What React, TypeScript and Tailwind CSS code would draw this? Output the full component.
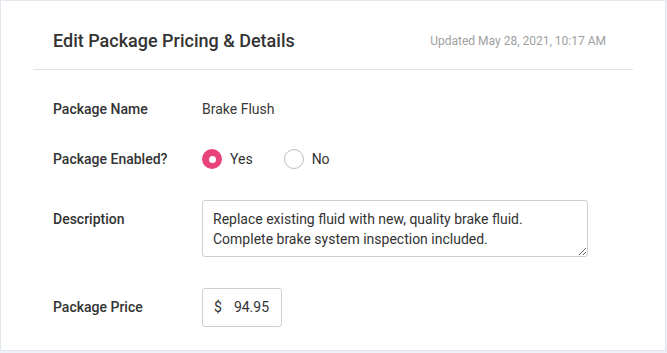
import { useState } from "react";

function Radio({ checked, label, onClick }: { checked: boolean; label: string; onClick: () => void }) {
  return (
    <button type="button" onClick={onClick} className="flex items-center gap-2">
      {checked ? (
        <span className="flex h-5 w-5 items-center justify-center rounded-full bg-[#e8427a]">
          <span className="h-[7px] w-[7px] rounded-full bg-white" />
        </span>
      ) : (
        <span className="h-5 w-5 rounded-full border border-[#bdbdbd] bg-white" />
      )}
      <span className="text-[14px] text-[#333]">{label}</span>
    </button>
  );
}

export default function App() {
  const [enabled, setEnabled] = useState(true);
  const [desc, setDesc] = useState(
    "Replace existing fluid with new, quality brake fluid.\nComplete brake system inspection included."
  );
  const [price, setPrice] = useState("94.95");

  return (
    <div className="h-screen w-full bg-[#eef1f5]" style={{ fontFamily: "Roboto, 'Liberation Sans', sans-serif" }}>
      <div className="h-[351px] w-[666px] overflow-hidden border border-[#e2e7ee] bg-white">
        {/* header */}
        <div className="mx-[32px] flex h-[69px] items-center justify-between border-b border-[#e0e2e6] pt-[11px] pl-5 pr-[27px]">
          <h1 className="text-[18px] font-medium text-[#333]">Edit Package Pricing &amp; Details</h1>
          <span className="text-[12px] text-[#a0a0a0]">Updated May 28, 2021, 10:17 AM</span>
        </div>

        <div className="px-[52px]">
          <div className="mt-[19px] flex h-10 items-center">
            <div className="w-[149px] text-[14px] font-medium text-[#333]">Package Name</div>
            <div className="text-[14px] text-[#3a3a3a]">Brake Flush</div>
          </div>

          <div className="mt-[10px] flex h-10 items-center">
            <div className="w-[149px] text-[14px] font-medium text-[#333]">Package Enabled?</div>
            <div className="flex items-center gap-[31px]">
              <Radio checked={enabled} label="Yes" onClick={() => setEnabled(true)} />
              <Radio checked={!enabled} label="No" onClick={() => setEnabled(false)} />
            </div>
          </div>

          <div className="mt-[21px] flex items-start">
            <div className="w-[149px] pt-[9px] text-[14px] leading-5 font-medium text-[#333]">Description</div>
            <textarea
              value={desc}
              onChange={(e) => setDesc(e.target.value)}
              className="h-[57px] w-[386px] rounded-[3px] border border-[#cfcfcf] px-[10px] pt-[8px] pb-1 text-[14px] leading-5 text-[#333] outline-none"
            />
          </div>

          <div className="mt-[31px] flex items-center">
            <div className="w-[149px] text-[14px] font-medium text-[#333]">Package Price</div>
            <div className="flex h-[39px] w-[80px] items-center rounded-[3px] border border-[#cfcfcf] pl-[11px] text-[14px] text-[#333]">
              <span>$</span>
              <input
                value={price}
                onChange={(e) => setPrice(e.target.value)}
                className="ml-[12px] w-[46px] bg-transparent outline-none"
              />
            </div>
          </div>
        </div>
      </div>
    </div>
  );
}
